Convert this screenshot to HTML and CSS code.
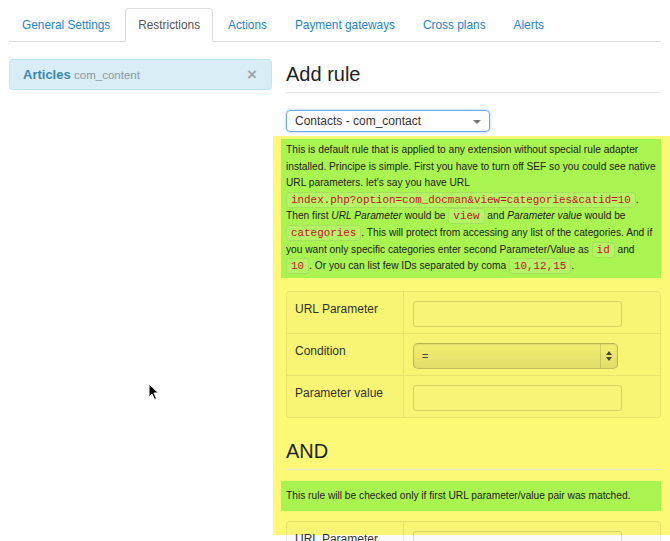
FILE: index.html
```html
<!DOCTYPE html>
<html>
<head>
<meta charset="utf-8">
<link rel="stylesheet" href="styles.css">
</head>
<body>
<ul class="tabs">
  <li><a>General Settings</a></li>
  <li class="active"><a>Restrictions</a></li>
  <li><a>Actions</a></li>
  <li><a>Payment gateways</a></li>
  <li><a>Cross plans</a></li>
  <li><a>Alerts</a></li>
</ul>
<div class="main">
  <div class="side">
    <div class="item">
      <span class="item-name">Articles</span> <span class="item-sub">com_content</span>
      <span class="close">×</span>
    </div>
  </div>
  <div class="content">
    <div class="pad">
      <h2 class="heading">Add rule</h2>
      <div class="select-main">Contacts - com_contact<span class="caret"></span></div>
    </div>
    <div class="highlight">
      <div class="note">This is default rule that is applied to any extension without special rule adapter installed. Principe is simple. First you have to turn off SEF so you could see native URL parameters. let's say you have URL <code>index.php?option=com_docman&amp;view=categories&amp;catid=10</code>. Then first <em>URL Parameter</em> would be <code>view</code> and <em>Parameter value</em> would be <code>categories</code>. This will protect from accessing any list of the categories. And if you want only specific categories enter second Parameter/Value as <code>id</code> and <code>10</code>. Or you can list few IDs separated by coma <code>10,12,15</code>.</div>
      <table class="rule">
        <tr><td class="lbl">URL Parameter</td><td class="fld"><div class="input"></div></td></tr>
        <tr><td class="lbl">Condition</td><td class="fld"><div class="cond"><span class="cond-val">=</span><span class="cond-arrows"><span class="up"></span><span class="down"></span></span></div></td></tr>
        <tr><td class="lbl">Parameter value</td><td class="fld"><div class="input"></div></td></tr>
      </table>
      <h2 class="heading and">AND</h2>
      <div class="note note2">This rule will be checked only if first URL parameter/value pair was matched.</div>
      <table class="rule rule2">
        <tr><td class="lbl">URL Parameter</td><td class="fld"><div class="input"></div></td></tr>
      </table>
    </div>
  </div>
</div>
<svg class="cursor" width="12" height="18" viewBox="0 0 12 18"><path d="M1 1 L1 14 L4 11 L6.5 16.5 L8.5 15.5 L6 10 L10.5 10 Z" fill="#000" stroke="#fff" stroke-width="1"/></svg>
</body>
</html>
```
FILE: styles.css
```css
html { overflow: hidden; }
body {
  margin: 0;
  padding-top: 8px;
  font-family: "Liberation Sans", Arial, sans-serif;
  font-size: 12px;
  color: #333;
  background: #fff;
  position: relative;
  height: 541px;
}
.tabs {
  list-style: none;
  margin: 0 9px;
  padding: 0;
  display: flex;
  border-bottom: 1px solid #ddd;
  font-size: 11.85px;
}
.tabs li { margin-bottom: -1px; margin-right: 2px; }
.tabs a {
  display: block;
  padding: 8px 12px;
  line-height: 16px;
  border: 1px solid transparent;
  border-radius: 4px 4px 0 0;
  color: #1e83cc;
}
.tabs .active a {
  color: #555;
  border-color: #ddd;
  border-bottom-color: #fff;
  background: #fff;
}
.main {
  display: flex;
  margin-top: 17px;
}
.side { width: 263px; margin-left: 9px; }
.item {
  background: #d9edf7;
  border: 1px solid #bce8f1;
  border-radius: 4px;
  height: 29px;
  line-height: 29px;
  padding: 0 13px;
  position: relative;
}
.item-name { color: #3a87ad; font-weight: bold; font-size: 13px; }
.item-sub { color: #8a9aa3; font-size: 11.5px; }
.close {
  position: absolute;
  right: 14px;
  top: 0;
  color: #9aa6ac;
  font-weight: bold;
  font-size: 17px;
}
.content { flex: 1; margin-left: 1px; }
.pad { padding: 0 9px 0 13px; }
.heading {
  margin: 3px 0 0;
  font-size: 20px;
  line-height: 24px;
  font-weight: normal;
  color: #222;
  padding-bottom: 6px;
  border-bottom: 1px solid #e5e5e5;
}
.select-main {
  margin-top: 17px;
  width: 194px;
  height: 20px;
  line-height: 20px;
  border: 1px solid #6aa8e6;
  border-radius: 4px;
  box-shadow: 0 0 3px rgba(82,168,236,.6);
  padding-left: 8px;
  font-size: 12px;
  color: #333;
  position: relative;
}
.caret {
  position: absolute;
  right: 8px;
  top: 9px;
  border-left: 4px solid transparent;
  border-right: 4px solid transparent;
  border-top: 4px solid #777;
}
.highlight {
  margin-top: 4px;
  background: #fdf977;
  height: 396px;
  padding: 3px 9px 0 13px;
}
.note {
  margin-left: -5px;
  background: #a9f450;
  font-size: 10.2px;
  line-height: 16.6px;
  padding: 3px 5px 3px 5px;
  color: #222;
}
.note code {
  font-family: "Liberation Mono", monospace;
  font-size: 10.9px;
  color: #c8102e;
  background: rgba(255,255,255,.12);
  border: 1px solid rgba(0,0,0,.08);
  border-radius: 3px;
  padding: 1px 4px;
  white-space: nowrap;
}
.rule {
  margin-top: 13px;
  width: 100%;
  border-collapse: separate;
  border-spacing: 0;
  border: 1px solid rgba(0,0,0,.07);
  border-radius: 4px;
  background: rgba(0,0,0,.02);
}
.rule td { border-top: 1px solid rgba(0,0,0,.07); vertical-align: top; }
.rule tr:first-child td { border-top: none; }
.lbl {
  width: 100px;
  padding: 8px 8px 14px;
  line-height: 18px;
  border-right: 1px solid rgba(0,0,0,.07);
}
.fld { padding: 9px 9px 6px; }
.input {
  width: 207px;
  height: 24px;
  border: 1px solid rgba(0,0,0,.13);
  border-radius: 3px;
  background: rgba(255,255,255,.03);
}
.cond {
  width: 203px;
  height: 24px;
  border: 1px solid rgba(0,0,0,.2);
  border-radius: 5px;
  background: linear-gradient(rgba(0,0,0,.02), rgba(0,0,0,.09));
  box-shadow: inset 0 1px 2px rgba(0,0,0,.1);
  display: flex;
  position: relative;
}
.cond-val { flex: 1; padding-left: 8px; line-height: 24px; font-size: 11px; color: #444; }
.cond-arrows {
  width: 16px;
  border-left: 1px solid rgba(0,0,0,.12);
  display: flex;
  flex-direction: column;
  align-items: center;
  justify-content: center;
  gap: 2px;
}
.up { border-left: 3px solid transparent; border-right: 3px solid transparent; border-bottom: 4px solid #444; }
.down { border-left: 3px solid transparent; border-right: 3px solid transparent; border-top: 4px solid #444; }
.and { margin-top: 21px; }
.note2 { margin-top: 11px; line-height: 17px; padding: 6px 5px 7px; }
.rule2 { margin-top: 10px; }
.cursor { position: absolute; left: 148px; top: 383px; }
```
